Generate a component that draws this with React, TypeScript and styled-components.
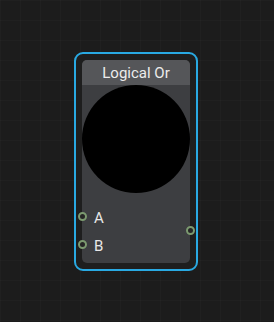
import React from "react";
import styled, { createGlobalStyle } from "styled-components";

const Global = createGlobalStyle`
  html, body { margin: 0; padding: 0; }
  body {
    width: 274px;
    height: 322px;
    overflow: hidden;
    background-color: #1c1c1c;
    background-image:
      linear-gradient(to right, rgba(255,255,255,0.018) 1px, transparent 1px),
      linear-gradient(to bottom, rgba(255,255,255,0.018) 1px, transparent 1px);
    background-size: 20px 20px;
    font-family: Roboto, "Noto Sans", "Liberation Sans", sans-serif;
  }
`;

const Canvas = styled.div`
  position: relative;
  width: 274px;
  height: 322px;
`;

const NodeFrame = styled.div<{ $x: number; $y: number }>`
  position: absolute;
  left: ${(p) => p.$x}px;
  top: ${(p) => p.$y}px;
  width: 124px;
  height: 219px;
  box-sizing: border-box;
  border: 2px solid #29a9e2;
  border-radius: 9px;
  padding: 6px;
  background: #1e1e1e;
`;

const NodeBody = styled.div`
  position: relative;
  height: 100%;
  background: #3d3e41;
  border-radius: 5px;
  display: flex;
  flex-direction: column;
`;

const Header = styled.div`
  height: 25px;
  background: #555659;
  border-radius: 5px 5px 0 0;
  display: flex;
  align-items: center;
  justify-content: center;
  color: #ececec;
  font-size: 15px;
`;

const Preview = styled.div`
  width: 108px;
  height: 108px;
  border-radius: 50%;
  background: #000;
`;

const Ports = styled.div`
  position: relative;
  margin-top: 9px;
  display: flex;
  flex-direction: column;
`;

const PortRow = styled.div`
  position: relative;
  height: 28px;
  display: flex;
  align-items: center;
  padding-left: 12px;
  padding-top: 4px;
  box-sizing: border-box;
  color: #e8e8e8;
  font-size: 15px;
`;

const Dot = styled.span<{ $side: "left" | "right" }>`
  position: absolute;
  top: 50%;
  ${(p) => (p.$side === "left" ? "left: -4.5px;" : "right: -4.5px;")}
  width: 9px;
  height: 9px;
  margin-top: -4.5px;
  box-sizing: border-box;
  border-radius: 50%;
  border: 2px solid #7c9a70;
  background: #262626;
`;

export default function App() {
  return (
    <>
      <Global />
      <Canvas>
        <NodeFrame $x={74} $y={52}>
          <NodeBody>
            <Header>Logical Or</Header>
            <Preview />
            <Ports>
              <PortRow>
                <Dot $side="left" />A
              </PortRow>
              <PortRow>
                <Dot $side="left" />B
              </PortRow>
              <Dot $side="right" />
            </Ports>
          </NodeBody>
        </NodeFrame>
      </Canvas>
    </>
  );
}
